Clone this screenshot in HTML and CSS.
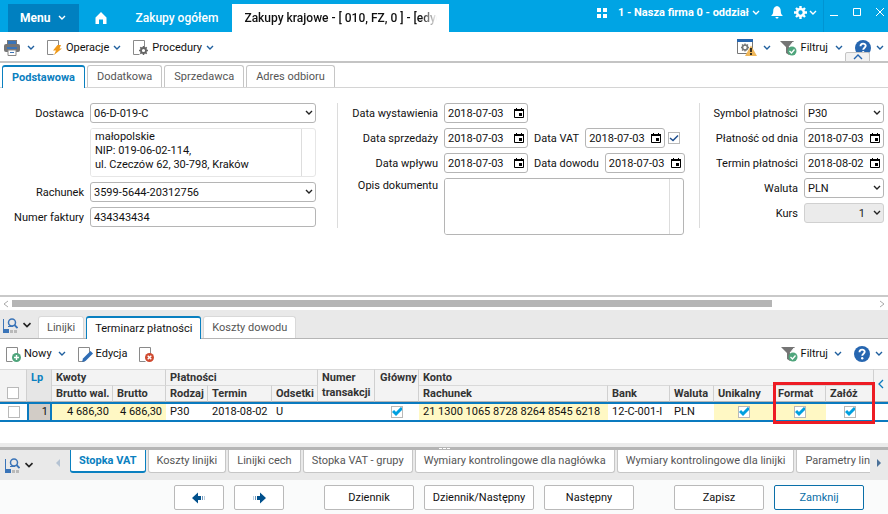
FILE: index.html
```html
<!DOCTYPE html>
<html lang="pl">
<head>
  <meta charset="UTF-8">
  <meta name="viewport" content="width=device-width, initial-scale=1.0">
  <title>Zakupy krajowe</title>
  <link rel="stylesheet" href="styles.css">
</head>
<body>
  <!-- Icon definitions -->
  <svg class="sprite" aria-hidden="true">
    <symbol id="chevron" viewBox="0 0 8 6"><path d="M1 1l3 3 3-3" fill="none" stroke="currentColor" stroke-width="1.4"/></symbol>
    <symbol id="calendar" viewBox="0 0 10 10"><path d="M.5 1.500h9v8h-9z" fill="none" stroke="#000"/><path d="M0 1h10v2H0zM2 0h1v1H2zM7 0h1v1H7zM5 5h3v3H5z"/></symbol>
    <symbol id="filter" viewBox="0 0 17 16"><path d="M0 1h14L9 7v8l-3-2V7z" fill="#757575"/><path d="M13 2L9 7" stroke="#fff" stroke-width="1"/><circle cx="12" cy="11" r="4.5" fill="#4fa57c"/><path d="M9.5 11l2 2 3-3.500" fill="none" stroke="#fff" stroke-width="1.300"/></symbol>
    <symbol id="help" viewBox="0 0 16 16"><circle cx="8" cy="8" r="8" fill="#2666b0"/><path d="M5.500 6.200c0-3.400 5.200-3.200 5.200-.4C10.700 7.700 8.200 7.600 8.200 9.800" fill="none" stroke="#fff" stroke-width="1.900"/><circle cx="8.200" cy="12.200" r="1.200" fill="#fff"/></symbol>
    <symbol id="view" viewBox="0 0 15 15"><path d="M.5 1v13" stroke="#3a74b8"/><path d="M0 11h6v4H0z" fill="#3a74b8"/><path d="M7 12h3v3H7zM11 12h3v3h-3z" fill="#b9b9b9"/><circle cx="9" cy="4.500" r="3.500" fill="none" stroke="#3a74b8" stroke-width="1.500"/><path d="M11.500 7l3 3" stroke="#3a74b8" stroke-width="1.800"/><path d="M5 8.500h5" stroke="#3a74b8"/></symbol>
    <symbol id="page" viewBox="0 0 12 15"><path d="M11.500 8V.5H.5v14h6" fill="none" stroke="#8a8a8a"/></symbol>
    <symbol id="arrow" viewBox="0 0 14 12"><path d="M0 6l6-5.500V4h3v4H6v3.500z" fill="#00508c"/><path d="M10.500 4v4" stroke="#6d96bb"/><path d="M12.500 4v4" stroke="#b9cddd"/></symbol>
  </svg>

  <div class="app">
    <header class="topbar">
      <button class="menu">Menu <svg class="chev"><use href="#chevron"/></svg></button>
      <button class="home" aria-label="Start"><svg width="12" height="12" viewBox="0 0 12 12"><path d="M6 0l5.500 5.500V12H8V7.500H4V12H.5V5.500z" fill="#fff"/></svg></button>
      <a class="toplink" href="#">Zakupy ogółem</a>
      <a class="toplink current" href="#"><span>Zakupy krajowe - [ 010, FZ, 0 ] - [edycja]</span></a>
      <div class="topright">
        <button aria-label="Aplikacje"><svg width="10" height="10" viewBox="0 0 10 10"><path d="M0 0h4v4H0zM6 0h4v4H6zM0 6h4v4H0zM6 6h4v4H6z" fill="#fff"/></svg></button>
        <button class="company">1 - Nasza firma 0 - oddział <svg class="chev"><use href="#chevron"/></svg></button>
        <button aria-label="Powiadomienia"><svg width="12" height="13" viewBox="0 0 12 13"><path d="M6 0c3 .8 3.800 2.500 3.800 5.500 0 2 .7 3 2.200 4.500H0c1.500-1.500 2.200-2.500 2.200-4.500C2.200 2.500 3 .8 6 0zM4.500 11h3c0 2-3 2-3 0z" fill="#fff"/></svg></button>
        <button class="settings" aria-label="Ustawienia"><svg width="13" height="13" viewBox="0 0 13 13"><circle cx="6.500" cy="6.500" r="3.400" fill="none" stroke="#fff" stroke-width="2.500"/><path d="M6.500 0v2.500M6.500 10.500V13M0 6.500h2.500M10.500 6.500H13M2 2l1.500 1.500M9.500 9.500L11 11M11 2L9.500 3.500M3.500 9.500L2 11" stroke="#fff" stroke-width="2.400"/></svg><svg class="chev"><use href="#chevron"/></svg></button>
      </div>
      <div class="window-buttons">
        <button aria-label="Minimalizuj"><svg width="8" height="9" viewBox="0 0 8 9"><path d="M0 7.500h8" stroke="#fff"/></svg></button>
        <button aria-label="Maksymalizuj"><svg width="8" height="8" viewBox="0 0 8 8"><path d="M.5.5h7v7h-7z" fill="none" stroke="#fff"/></svg></button>
        <button aria-label="Zamknij okno"><svg width="8" height="8" viewBox="0 0 8 8"><path d="M0 0l8 8M8 0L0 8" stroke="#fff"/></svg></button>
      </div>
    </header>

    <div class="toolbar main-toolbar">
      <button class="tool print" aria-label="Drukuj"><svg width="16" height="16" viewBox="0 0 16 16"><path d="M3 0h10v5H3z" fill="#777"/><path d="M4 1h8v3H4z" fill="#3a74b8"/><rect y="4" width="16" height="8" rx="2" fill="#757575"/><path d="M3 7h10v2H3z" fill="#3a74b8"/><path d="M4 10h8v5.500H4z" fill="#fff" stroke="#888"/><path d="M6 12.500h4" stroke="#3a74b8"/></svg><svg class="chev"><use href="#chevron"/></svg></button>
      <button class="tool"><span class="icon"><svg width="12" height="15"><use href="#page"/></svg><svg class="badge" width="9" height="10" viewBox="0 0 9 10"><path d="M4.500 0H8L6.500 3.500H9L1 10l2-4.500H0z" fill="#f09a1a"/></svg></span>Operacje <svg class="chev"><use href="#chevron"/></svg></button>
      <button class="tool"><span class="icon"><svg width="12" height="15"><use href="#page"/></svg><svg class="badge" width="9" height="9" viewBox="0 0 9 9"><circle cx="4.500" cy="4.500" r="2.500" fill="#fff" stroke="#666" stroke-width="1.800"/><path d="M4.500 0v2M4.500 7v2M0 4.500h2M7 4.500h2M1.300 1.300l1.300 1.300M6.400 6.400l1.300 1.300M7.700 1.300L6.400 2.600M2.600 6.400L1.300 7.700" stroke="#666" stroke-width="1.500"/></svg></span>Procedury <svg class="chev"><use href="#chevron"/></svg></button>
      <span class="spacer"></span>
      <button class="tool config" aria-label="Konfiguracja"><svg width="20" height="17" viewBox="0 0 20 17"><path d="M.5.5h15v14H.5z" fill="#fff" stroke="#777"/><path d="M0 0h16v3H0z" fill="#2666b0"/><circle cx="8" cy="8.500" r="2.500" fill="none" stroke="#777" stroke-width="1.700"/><path d="M8 4.500v2M8 10.500v2M4 8.500h2M10 8.500h2M5 5.500l1.300 1.300M11 5.500L9.700 6.800M5 11.500l1.300-1.300" stroke="#777" stroke-width="1.300"/><path d="M14 6.500L20 17H8z" fill="#efb75a"/><path d="M14 9v4M14 14v2" stroke="#111" stroke-width="1.600"/></svg><svg class="chev"><use href="#chevron"/></svg></button>
      <button class="tool"><svg width="17" height="16"><use href="#filter"/></svg>Filtruj <svg class="chev wide"><use href="#chevron"/></svg></button>
      <button class="tool help" aria-label="Pomoc"><svg width="16" height="16"><use href="#help"/></svg><svg class="chev"><use href="#chevron"/></svg></button>
      <button class="collapse" aria-label="Zwiń"><svg width="10" height="6" viewBox="0 0 10 6"><path d="M1 5l4-4 4 4" fill="none" stroke="#2666b0" stroke-width="1.400"/></svg></button>
    </div>

    <nav class="tabs top-tabs">
      <button class="tab active">Podstawowa</button>
      <button class="tab">Dodatkowa</button>
      <button class="tab">Sprzedawca</button>
      <button class="tab">Adres odbioru</button>
    </nav>

    <form class="form">
      <div class="col">
        <div class="row">
          <label for="supplier">Dostawca</label>
          <select id="supplier"><option>06-D-019-C</option></select>
        </div>
        <div class="row">
          <label for="address"></label>
          <div class="area light">
            <textarea id="address" aria-label="Adres dostawcy" readonly>małopolskie
NIP: 019-06-02-114,
ul. Czeczów 62, 30-798, Kraków</textarea>
            <span class="area-bar"></span>
          </div>
        </div>
        <div class="row">
          <label for="account">Rachunek</label>
          <select id="account"><option>3599-5644-20312756</option></select>
        </div>
        <div class="row">
          <label for="invoice">Numer faktury</label>
          <input id="invoice" type="text" value="434343434">
        </div>
      </div>

      <div class="col">
        <div class="row">
          <label for="issued">Data wystawienia</label>
          <span class="date"><input id="issued" type="text" value="2018-07-03"><button type="button" aria-label="Kalendarz"><svg width="10" height="10"><use href="#calendar"/></svg></button></span>
        </div>
        <div class="row">
          <label for="sold">Data sprzedaży</label>
          <span class="date"><input id="sold" type="text" value="2018-07-03"><button type="button" aria-label="Kalendarz"><svg width="10" height="10"><use href="#calendar"/></svg></button></span>
          <label class="inline" for="vat">Data VAT</label>
          <span class="date narrow"><input id="vat" type="text" value="2018-07-03"><button type="button" aria-label="Kalendarz"><svg width="10" height="10"><use href="#calendar"/></svg></button></span>
          <input class="check dark" type="checkbox" aria-label="VAT" checked>
        </div>
        <div class="row">
          <label for="received">Data wpływu</label>
          <span class="date"><input id="received" type="text" value="2018-07-03"><button type="button" aria-label="Kalendarz"><svg width="10" height="10"><use href="#calendar"/></svg></button></span>
          <label class="inline" for="proof">Data dowodu</label>
          <span class="date narrow"><input id="proof" type="text" value="2018-07-03"><button type="button" aria-label="Kalendarz"><svg width="10" height="10"><use href="#calendar"/></svg></button></span>
        </div>
        <div class="row top">
          <label for="description">Opis dokumentu</label>
          <div class="area tall">
            <textarea id="description"></textarea>
            <span class="area-bar"></span>
          </div>
        </div>
      </div>

      <div class="col">
        <div class="row">
          <label for="symbol">Symbol płatności</label>
          <select id="symbol"><option>P30</option></select>
        </div>
        <div class="row">
          <label for="payfrom">Płatność od dnia</label>
          <span class="date fill"><input id="payfrom" type="text" value="2018-07-03"><button type="button" aria-label="Kalendarz"><svg width="10" height="10"><use href="#calendar"/></svg></button></span>
        </div>
        <div class="row">
          <label for="due">Termin płatności</label>
          <span class="date fill"><input id="due" type="text" value="2018-08-02"><button type="button" aria-label="Kalendarz"><svg width="10" height="10"><use href="#calendar"/></svg></button></span>
        </div>
        <div class="row">
          <label for="currency">Waluta</label>
          <select id="currency"><option>PLN</option></select>
        </div>
        <div class="row">
          <label for="rate">Kurs</label>
          <select id="rate" class="rate" disabled><option>1</option></select>
        </div>
      </div>
    </form>

    <div class="scrollbar">
      <svg width="6" height="8" viewBox="0 0 6 8"><path d="M5 1L1 4l4 3" fill="none" stroke="#aaa"/></svg>
      <div class="track"><div class="thumb"></div></div>
      <svg width="6" height="8" viewBox="0 0 6 8"><path d="M1 1l4 3-4 3" fill="none" stroke="#aaa"/></svg>
    </div>

    <nav class="tabs mid-tabs">
      <button class="view" aria-label="Widok"><svg width="15" height="15"><use href="#view"/></svg><svg class="chev"><use href="#chevron"/></svg></button>
      <button class="tab">Linijki</button>
      <button class="tab active">Terminarz płatności</button>
      <button class="tab">Koszty dowodu</button>
    </nav>

    <div class="toolbar grid-toolbar">
      <button class="tool"><span class="icon"><svg width="12" height="15"><use href="#page"/></svg><svg class="badge" width="9" height="9" viewBox="0 0 9 9"><circle cx="4.500" cy="4.500" r="4.500" fill="#4fa57c"/><path d="M4.500 2v5M2 4.500h5" stroke="#fff" stroke-width="1.400"/></svg></span>Nowy <svg class="chev wide"><use href="#chevron"/></svg></button>
      <button class="tool"><span class="icon"><svg width="12" height="15"><use href="#page"/></svg><svg class="badge" width="11" height="11" viewBox="0 0 11 11"><path d="M0 11l1-3.500L8.500 0 11 2.500 3.500 10z" fill="#2f6db5"/></svg></span>Edycja</button>
      <button class="tool" aria-label="Usuń"><span class="icon"><svg width="12" height="15"><use href="#page"/></svg><svg class="badge" width="9" height="9" viewBox="0 0 9 9"><circle cx="4.500" cy="4.500" r="4.500" fill="#cf4a30"/><path d="M2.700 2.700l3.600 3.600M6.300 2.700L2.700 6.300" stroke="#fff" stroke-width="1.400"/></svg></span></button>
      <span class="spacer"></span>
      <button class="tool"><svg width="17" height="16"><use href="#filter"/></svg>Filtruj <svg class="chev wide"><use href="#chevron"/></svg></button>
      <button class="tool help" aria-label="Pomoc"><svg width="16" height="16"><use href="#help"/></svg><svg class="chev"><use href="#chevron"/></svg></button>
    </div>

    <div class="table-box">
      <table>
        <colgroup>
          <col class="c-check"><col class="c-lp"><col class="c-net"><col class="c-gross"><col class="c-kind"><col class="c-date"><col class="c-interest"><col class="c-number"><col class="c-main"><col class="c-account"><col class="c-bank"><col class="c-currency"><col class="c-unique"><col class="c-format"><col class="c-open"><col class="c-side">
        </colgroup>
        <thead>
          <tr>
            <th rowspan="2" class="select-all"><input class="check" type="checkbox" aria-label="Zaznacz wszystko"></th>
            <th rowspan="2" class="lp">Lp</th>
            <th colspan="2">Kwoty</th>
            <th colspan="3">Płatności</th>
            <th rowspan="2">Numer transakcji</th>
            <th rowspan="2" class="main">Główny</th>
            <th colspan="6">Konto</th>
            <th rowspan="2" class="side"><button aria-label="Rozwiń"><svg width="6" height="10" viewBox="0 0 6 10"><path d="M5 1L1 5l4 4" fill="none" stroke="#0a7abf" stroke-width="1.300"/></svg></button></th>
          </tr>
          <tr>
            <th>Brutto wal.</th>
            <th>Brutto</th>
            <th>Rodzaj</th>
            <th>Termin</th>
            <th>Odsetki</th>
            <th>Rachunek</th>
            <th>Bank</th>
            <th>Waluta</th>
            <th>Unikalny</th>
            <th>Format</th>
            <th>Załóż</th>
          </tr>
        </thead>
        <tbody>
          <tr>
            <td class="center"><input class="check" type="checkbox" aria-label="Zaznacz wiersz"></td>
            <td class="lp">1</td>
            <td class="num hl">4 686,30</td>
            <td class="num hl">4 686,30</td>
            <td>P30</td>
            <td>2018-08-02</td>
            <td>U</td>
            <td></td>
            <td class="center"><input class="check" type="checkbox" aria-label="Główny" checked></td>
            <td class="hl">21 1300 1065 8728 8264 8545 6218</td>
            <td>12-C-001-I</td>
            <td>PLN</td>
            <td class="center hl"><input class="check" type="checkbox" aria-label="Unikalny" checked></td>
            <td class="center hl"><input class="check" type="checkbox" aria-label="Format" checked></td>
            <td class="center"><input class="check" type="checkbox" aria-label="Załóż" checked></td>
            <td></td>
          </tr>
        </tbody>
      </table>
      <div class="marker"></div>
    </div>

    <div class="splitter"><i></i><i></i><i></i></div>

    <nav class="tabs bottom-tabs">
      <button class="view" aria-label="Widok"><svg width="15" height="15"><use href="#view"/></svg><svg class="chev"><use href="#chevron"/></svg></button>
      <button class="scroll" aria-label="Poprzednie"><svg width="4" height="8" viewBox="0 0 4 8"><path d="M4 0v8L0 4z" fill="#b5c3d3"/></svg></button>
      <div class="tab-list">
        <button class="tab active">Stopka VAT</button>
        <button class="tab">Koszty linijki</button>
        <button class="tab">Linijki cech</button>
        <button class="tab">Stopka VAT - grupy</button>
        <button class="tab">Wymiary kontrolingowe dla nagłówka</button>
        <button class="tab">Wymiary kontrolingowe dla linijki</button>
        <button class="tab">Parametry linijki</button>
      </div>
      <button class="scroll next" aria-label="Następne"><svg width="4" height="8" viewBox="0 0 4 8"><path d="M0 0v8l4-4z" fill="#4b7199"/></svg></button>
    </nav>

    <footer class="actions">
      <div class="group">
        <button class="btn small" aria-label="Wstecz"><svg width="14" height="12"><use href="#arrow"/></svg></button>
        <button class="btn small" aria-label="Dalej"><svg class="flip" width="14" height="12"><use href="#arrow"/></svg></button>
      </div>
      <div class="group">
        <button class="btn">Dziennik</button>
        <button class="btn large">Dziennik/Następny</button>
        <button class="btn">Następny</button>
      </div>
      <div class="group">
        <button class="btn">Zapisz</button>
        <button class="btn primary">Zamknij</button>
      </div>
    </footer>
  </div>
</body>
</html>
```

FILE: styles.css
```css
* {
  box-sizing: border-box;
}

body {
  margin: 0;
  font-family: Roboto, "Liberation Sans", sans-serif;
  font-size: 11px;
  line-height: 14px;
  color: #111;
  background: #fff;
}

button,
input,
select,
textarea {
  font: inherit;
  color: inherit;
  margin: 0;
}

button {
  padding: 0;
  border: none;
  background: none;
  cursor: pointer;
}

svg {
  display: block;
  flex: none;
}

.sprite {
  position: absolute;
  width: 0;
  height: 0;
}

.chev {
  width: 8px;
  height: 6px;
  color: #1f5f9e;
}

.app {
  display: flex;
  flex-direction: column;
  min-height: 100vh;
}

/* Top bar */
.topbar {
  display: flex;
  align-items: flex-end;
  height: 32px;
  padding-left: 8px;
  background: #00a4e4;
  color: #fff;
  font-size: 12px;
}

.topbar .chev {
  color: #fff;
}

.menu,
.home,
.toplink {
  display: flex;
  align-items: center;
  height: 28px;
}

.menu {
  gap: 8px;
  padding: 0 13px 0 12px;
  background: #0080c0;
  font-weight: 700;
}

.home {
  padding: 0 16px;
}

.toplink {
  padding: 0 12px;
  color: #fff;
  font-weight: 500;
  text-decoration: none;
  white-space: nowrap;
}

.toplink.current {
  width: 217px;
  margin-left: 2px;
  background: #fff;
  color: #111;
}

.toplink.current span {
  overflow: hidden;
  mask-image: linear-gradient(to right, #000 92%, transparent);
}

.topright {
  display: flex;
  align-items: center;
  align-self: flex-start;
  gap: 11px;
  height: 25px;
  margin-left: auto;
  padding-right: 6px;
  font-size: 11px;
}

.company,
.settings {
  display: flex;
  align-items: center;
  gap: 3px;
  font-weight: 700;
}

.settings {
  gap: 2px;
}

.window-buttons {
  display: flex;
  gap: 15px;
  align-items: center;
  height: 32px;
  padding: 0 4px 8px 6px;
  border-left: 1px solid #0094d2;
}

/* Toolbars */
.toolbar {
  position: relative;
  display: flex;
  align-items: center;
  gap: 12px;
  height: 30px;
  padding: 0 5px 0 6px;
}

.main-toolbar {
  height: 31px;
  padding: 2px 4px 0;
  border-bottom: 2px solid #c4c4c4;
}

.tool {
  display: flex;
  align-items: center;
  gap: 4px;
  height: 20px;
}

.grid-toolbar .tool {
  gap: 3px;
}

.tool.print {
  gap: 7px;
}

.tool.config {
  gap: 6px;
  margin-right: -3px;
}

.toolbar .tool.help {
  gap: 5px;
}

.chev.wide {
  margin-left: 3px;
}

.icon {
  position: relative;
  width: 15px;
  height: 15px;
}

.badge {
  position: absolute;
  right: 0;
  bottom: 0;
}

.spacer {
  flex: 1;
}

.collapse {
  position: absolute;
  right: 18px;
  bottom: -1px;
  display: flex;
  align-items: center;
  justify-content: center;
  width: 25px;
  height: 10px;
  border: 1px solid #c4c4c4;
  border-radius: 2px 2px 0 0;
  background: #f2f2f2;
}

/* Tabs */
.tabs {
  display: flex;
  align-items: flex-end;
  gap: 2px;
  padding-left: 2px;
  border-bottom: 1px solid #d4d4d4;
}

.tab {
  flex: none;
  height: 22px;
  padding: 0 9px;
  border: 1px solid #c6c6c6;
  border-bottom: none;
  border-radius: 3px 3px 0 0;
  background: #fff;
  color: #555;
  white-space: nowrap;
}

.tab.active {
  margin-bottom: -1px;
  height: 23px;
  border: 1px solid #0a80c0;
  border-top-width: 2px;
  border-bottom: none;
  color: #0a80c0;
  font-weight: 700;
}

.top-tabs {
  height: 25px;
}

.mid-tabs {
  height: 29px;
  padding-left: 3px;
  border-color: #b5b5b5;
  background: #e9e9e9;
}

.mid-tabs .tab {
  padding: 0 8px;
  border-color: #d9d9d9;
}

.mid-tabs .tab.active {
  border-color: #0a80c0;
  color: #111;
  font-weight: 400;
}

.view {
  display: flex;
  align-items: center;
  gap: 4px;
  width: 33px;
  height: 25px;
}

.view .chev {
  width: 10px;
  height: 7px;
  color: #222;
}

/* Form */
.form {
  flex: 1;
  display: grid;
  grid-template-columns: minmax(0, 337fr) minmax(0, 362fr) minmax(0, 189fr);
  align-items: start;
  padding: 15px 0 0;
}

.col {
  display: flex;
  flex-direction: column;
  gap: 5px;
  height: 125px;
  padding-right: 21px;
}

.col + .col {
  border-left: 1px solid #dcdcdc;
  padding-right: 15px;
}

.col:last-child {
  padding-right: 4px;
}

.row {
  display: flex;
  align-items: center;
  gap: 6px;
}

.row.top {
  align-items: flex-start;
}

.row label {
  flex: none;
  width: 84px;
  padding-top: 1px;
  text-align: right;
}

.col + .col .row label {
  width: 100px;
}

.col:last-child .row label {
  width: 98px;
}

.col + .col .row label.inline {
  width: auto;
}

.row select,
.row > input[type="text"],
.date,
.area {
  height: 20px;
  border: 1px solid #b5b5b5;
  border-radius: 3px;
  background: #fff;
}

.row select,
.row > input[type="text"] {
  flex: 1;
  min-width: 0;
  padding: 1px 3px 0;
}

.row select {
  appearance: none;
  background: #fff url("data:image/svg+xml,%3Csvg xmlns='http://www.w3.org/2000/svg' width='8' height='6'%3E%3Cpath d='M1 1l3 3 3-3' fill='none' stroke='%23222' stroke-width='1.4'/%3E%3C/svg%3E") no-repeat right 2px center;
}

.row select.rate {
  padding-right: 18px;
  border-color: #d0d0d0;
  background-color: #ebebeb;
  color: #222;
  opacity: 1;
  text-align: right;
  text-align-last: right;
}

.date {
  display: flex;
  align-items: center;
  width: 84px;
  padding-right: 3px;
}

.date.narrow {
  width: 80px;
}

.date.fill {
  flex: 1;
  width: auto;
  min-width: 0;
}

.date input {
  flex: 1;
  min-width: 0;
  height: 18px;
  padding: 1px 0 0 3px;
  border: none;
  background: none;
}

.area {
  display: flex;
  flex: 1;
  height: 49px;
  overflow: hidden;
}

.area.tall {
  height: 57px;
}

.area textarea {
  flex: 1;
  min-width: 0;
  padding: 1px 4px;
  border: none;
  resize: none;
  overflow: hidden;
}

.area-bar {
  width: 14px;
  border-left: 1px solid #ddd;
}

.area.light {
  border-color: #e6e6e6;
}

.check {
  appearance: none;
  flex: none;
  display: block;
  width: 12px;
  height: 12px;
  border: 1px solid #b9b9b9;
  background: #fff;
}

.check:checked {
  background: #fff url("data:image/svg+xml,%3Csvg xmlns='http://www.w3.org/2000/svg' width='12' height='10'%3E%3Cpath d='M2 4l3 3L11 1' fill='none' stroke='%2300a0e0' stroke-width='3'/%3E%3C/svg%3E") no-repeat center;
}

.check.dark:checked {
  background-image: url("data:image/svg+xml,%3Csvg xmlns='http://www.w3.org/2000/svg' width='10' height='8'%3E%3Cpath d='M1 4l3 2.500L9 1.500' fill='none' stroke='%231f4f8f' stroke-width='1.500'/%3E%3C/svg%3E");
}

.date + .check {
  margin-left: -3px;
}

/* Horizontal scrollbar */
.scrollbar {
  display: flex;
  align-items: center;
  gap: 3px;
  height: 15px;
  padding: 0 3px;
  border-top: 2px solid #c9c9c9;
}

.track {
  flex: 1;
}

.thumb {
  width: 88%;
  height: 7px;
  background: #b5b5b5;
}

/* Table */
.table-box {
  position: relative;
  height: 74px;
}

table {
  width: 100%;
  table-layout: fixed;
  border-collapse: separate;
  border-spacing: 0;
}

.c-check { width: 27px; }
.c-lp { width: 25px; }
.c-net { width: 61px; }
.c-gross { width: 53px; }
.c-kind { width: 42px; }
.c-date { width: 64px; }
.c-interest { width: 46px; }
.c-number { width: 57px; }
.c-main { width: 44px; }
.c-account { width: 189px; }
.c-bank { width: 62px; }
.c-currency { width: 44px; }
.c-unique { width: 60px; }
.c-format { width: 52px; }
.c-open { width: 48px; }
.c-side { width: 14px; }

th {
  height: 16px;
  padding: 0 0 0 4px;
  border-top: 1px solid #d9d9d9;
  border-right: 1px solid #d0d0d0;
  background: #f3f3f3;
  color: #333;
  font-weight: 700;
  line-height: 15px;
  text-align: left;
  vertical-align: top;
  white-space: nowrap;
}

th[rowspan] {
  white-space: normal;
}

thead tr:last-child th,
th[rowspan] {
  border-bottom: 1px solid #b5b5b5;
}

th.select-all {
  padding: 0 0 2px 7px;
  vertical-align: bottom;
}

th.lp {
  background: #e6e6e6;
  color: #0a80c0;
}

th.main {
  padding-left: 5px;
}

th.side {
  padding: 0;
  border-right: none;
  vertical-align: middle;
}

th.side button {
  padding: 0 4px;
}

td {
  height: 20px;
  padding: 0 4px;
  border-top: 2px solid #0a7abf;
  border-bottom: 2px solid #0a7abf;
  white-space: nowrap;
}

td.center {
  padding: 0;
}

td .check {
  margin: 0 auto;
}

td.num {
  text-align: right;
}

td.hl {
  background: #fff8c4;
}

td.lp {
  padding: 0 2px;
  border: 2px solid #0a7abf;
  background: #d2ccc6;
  text-align: right;
}

.marker {
  position: absolute;
  top: 13px;
  right: 13px;
  width: 102px;
  height: 42px;
  border: 3px solid #ed1c24;
  pointer-events: none;
}

.splitter {
  display: flex;
  gap: 1px;
  align-items: center;
  justify-content: center;
  height: 7px;
  border-top: 4px solid #ebebeb;
  background: #b5b5b5;
}

.splitter i {
  width: 3px;
  height: 1px;
  background: #fff;
}

/* Bottom tabs */
.bottom-tabs {
  align-items: flex-start;
  gap: 0;
  height: 30px;
  padding-left: 5px;
  border-bottom: none;
  background: #e9e9e9;
}

.bottom-tabs .view {
  height: 30px;
}

.scroll {
  display: flex;
  align-items: center;
  justify-content: flex-end;
  width: 23px;
  height: 26px;
  padding-right: 1px;
}

.scroll.next {
  width: 18px;
  justify-content: center;
}

.tab-list {
  flex: 1;
  display: flex;
  gap: 2px;
  min-width: 0;
  margin-left: 9px;
  overflow: hidden;
}

.bottom-tabs .tab {
  height: 23px;
  margin: 0;
  padding: 0 8px;
  border: 1px solid #c6c6c6;
  border-top: none;
  border-radius: 0 0 3px 3px;
}

.bottom-tabs .tab.active {
  border-color: #0a80c0;
  border-bottom-width: 2px;
}

/* Footer actions */
.actions {
  display: flex;
  justify-content: flex-end;
  gap: 40px;
  height: 34px;
  padding: 5px 24px 0 0;
  background: #fafbfb;
}

.group {
  display: flex;
  gap: 10px;
}

.btn {
  display: flex;
  align-items: center;
  justify-content: center;
  width: 90px;
  height: 25px;
  border: 1px solid #b9b9b9;
  border-radius: 2px;
  background: #fff;
}

.btn.small {
  width: 50px;
}

.btn.large {
  width: 110px;
}

.btn.primary {
  border-color: #0a6fa8;
  color: #0a6fa8;
}

.flip {
  transform: scaleX(-1);
}
```
